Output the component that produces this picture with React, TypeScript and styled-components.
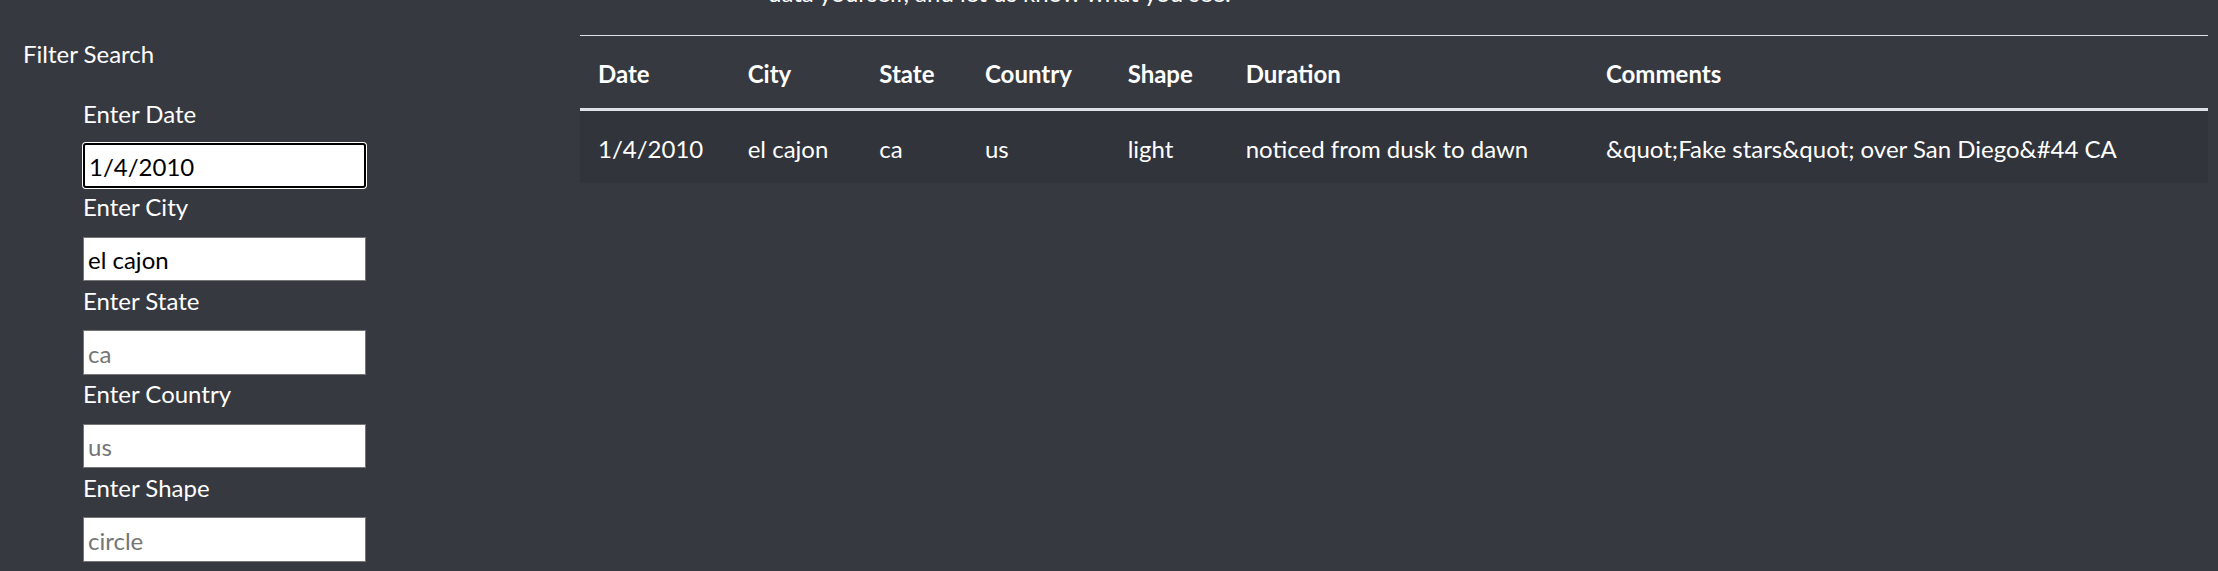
import React from "react";
import styled, { createGlobalStyle } from "styled-components";

const GlobalStyle = createGlobalStyle`
  html, body {
    margin: 0;
    padding: 0;
    background: #363940;
  }
  body {
    font-family: Lato, "Noto Sans", "Liberation Sans", sans-serif;
    color: #ffffff;
    overflow: hidden;
  }
`;

const Page = styled.div`
  display: flex;
  align-items: flex-start;
  width: 2218px;
  height: 571px;
  overflow: hidden;
  background: #363940;
`;

const Sidebar = styled.aside`
  flex: 0 0 580px;
  box-sizing: border-box;
  padding: 36px 0 0 23px;
`;

const SidebarTitle = styled.div`
  font-size: 24px;
  line-height: 36px;
  font-weight: 400;
`;

const FilterList = styled.ul`
  list-style: none;
  margin: 22px 0 0;
  padding: 0 0 0 60px;
`;

const FilterItem = styled.li`
  display: flex;
  flex-direction: column;
  align-items: flex-start;
`;

const FilterLabel = styled.label`
  font-size: 24px;
  line-height: 36px;
  padding-top: 1.5px;
  margin-bottom: 11.5px;
`;

const FilterInput = styled.input<{ $focused?: boolean }>`
  box-sizing: border-box;
  width: 283px;
  height: 44.5px;
  margin: 0;
  padding: 2px 4px 0;
  font-family: inherit;
  font-size: 24px;
  color: #000;
  background: #fff;
  border: ${(p) => (p.$focused ? "2px solid #000" : "1px solid #767676")};
  border-radius: ${(p) => (p.$focused ? "3px" : "0")};
  box-shadow: ${(p) => (p.$focused ? "0 0 0 1px #ffffff" : "none")};
  outline: none;
  &::placeholder {
    color: #757575;
    opacity: 1;
  }
`;

const Main = styled.main`
  flex: 1 1 auto;
  box-sizing: border-box;
  padding-right: 10px;
  margin-top: -25px;
`;

const Intro = styled.p`
  margin: 0 0 24px;
  padding-left: 188px;
  font-size: 24px;
  line-height: 36px;
  color: #ffffff;
`;

const Table = styled.table`
  width: 100%;
  table-layout: fixed;
  border-collapse: collapse;
  font-size: 24px;
  line-height: 36px;
  color: #ffffff;
`;

const HeadCell = styled.th`
  text-align: left;
  font-weight: 700;
  padding: 19.5px 18px 16.5px;
  border-top: 1px solid #dee2e6;
  border-bottom: 3px solid #dee2e6;
  white-space: nowrap;
`;

const BodyRow = styled.tr`
  background: #31343b;
`;

const BodyCell = styled.td`
  padding: 19.5px 18px 16.5px;
  white-space: nowrap;
`;

const columns = [
  { key: "date", title: "Date", width: 149.7 },
  { key: "city", title: "City", width: 131.6 },
  { key: "state", title: "State", width: 105.7 },
  { key: "country", title: "Country", width: 142.7 },
  { key: "shape", title: "Shape", width: 118 },
  { key: "duration", title: "Duration", width: 360.3 },
  { key: "comments", title: "Comments", width: 620 },
];

const rows = [
  {
    date: "1/4/2010",
    city: "el cajon",
    state: "ca",
    country: "us",
    shape: "light",
    duration: "noticed from dusk to dawn",
    comments: "&quot;Fake stars&quot; over San Diego&#44 CA",
  },
];

const filters = [
  { id: "datetime", label: "Enter Date", value: "1/4/2010", placeholder: "1/11/2011", focused: true },
  { id: "city", label: "Enter City", value: "el cajon", placeholder: "roswell" },
  { id: "state", label: "Enter State", value: "", placeholder: "ca" },
  { id: "country", label: "Enter Country", value: "", placeholder: "us" },
  { id: "shape", label: "Enter Shape", value: "", placeholder: "circle" },
];

export default function App() {
  return (
    <>
      <GlobalStyle />
      <Page>
        <Sidebar>
          <SidebarTitle>Filter Search</SidebarTitle>
          <FilterList>
            {filters.map((f) => (
              <FilterItem key={f.id}>
                <FilterLabel htmlFor={f.id}>{f.label}</FilterLabel>
                <FilterInput
                  id={f.id}
                  type="text"
                  defaultValue={f.value}
                  placeholder={f.placeholder}
                  $focused={f.focused}
                />
              </FilterItem>
            ))}
          </FilterList>
        </Sidebar>
        <Main>
          <Intro>data yourself, and let us know what you see.</Intro>
          <Table>
            <colgroup>
              {columns.map((c) => (
                <col key={c.key} style={{ width: `${c.width}px` }} />
              ))}
            </colgroup>
            <thead>
              <tr>
                {columns.map((c) => (
                  <HeadCell key={c.key}>{c.title}</HeadCell>
                ))}
              </tr>
            </thead>
            <tbody>
              {rows.map((r, i) => (
                <BodyRow key={i}>
                  {columns.map((c) => (
                    <BodyCell key={c.key}>{(r as Record<string, string>)[c.key]}</BodyCell>
                  ))}
                </BodyRow>
              ))}
            </tbody>
          </Table>
        </Main>
      </Page>
    </>
  );
}
